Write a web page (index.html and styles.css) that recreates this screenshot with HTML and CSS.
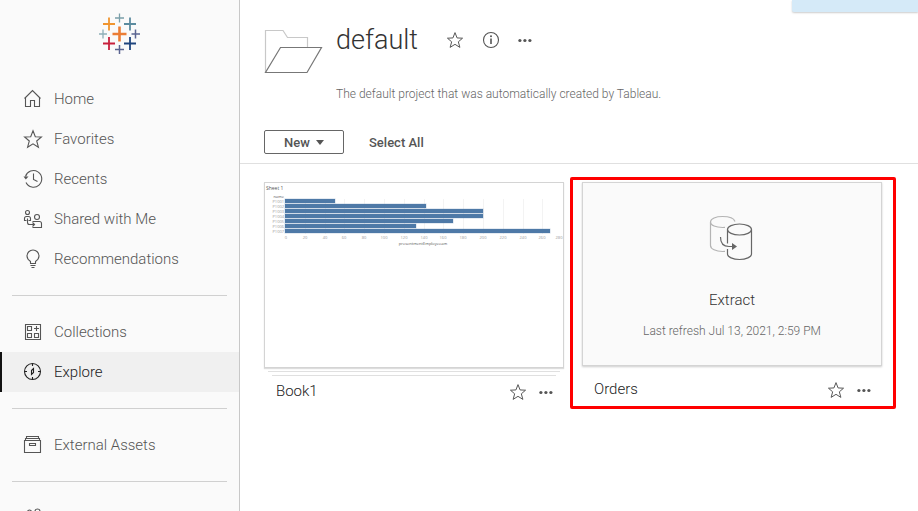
FILE: index.html
```
<!DOCTYPE html>
<html lang="en">
<head>
    <meta charset="UTF-8">
    <meta name="viewport" content="width=device-width, initial-scale=1.0">
    <link rel="stylesheet" href="styles.css">
    <title>default - Tableau</title>
</head>
<body>

<svg class="defs" width="0" height="0" aria-hidden="true">
    <symbol id="star" viewBox="0 0 20 20">
        <path d="M10 1.8 L12.3 7.7 L18.4 8 L13.7 12 L15.4 18.2 L10 14.8 L4.6 18.2 L6.3 12 L1.6 8 L7.7 7.7 Z"/>
    </symbol>
    <symbol id="dots" viewBox="0 0 14 18">
        <g class="solid"><circle cx="1.900" cy="9.500" r="1.600"/><circle cx="6.900" cy="9.500" r="1.600"/><circle cx="11.900" cy="9.500" r="1.600"/></g>
    </symbol>
</svg>

<div class="app">
    <nav class="sidebar">
        <svg class="logo" viewBox="0.5 0.5 41 41" aria-label="Tableau" role="img">
            <path stroke="#eb7d35" stroke-width="2.600" d="M21 14v15M14 21.500h14"/>
            <path stroke="#f0952f" stroke-width="1.800" d="M10.500 5v13M4.500 11.500h12"/>
            <path stroke="#5b8b9f" stroke-width="1.800" d="M31.500 5v13M25.500 11.500h12"/>
            <path stroke="#c8203c" stroke-width="1.800" d="M10.500 24.500v13M4.500 31h12"/>
            <path stroke="#1f457e" stroke-width="1.800" d="M31.500 24.500v13M25.500 31h12"/>
            <path stroke="#7a9fa9" stroke-width="1.300" d="M21 1v9M16.500 5.500h9"/>
            <path stroke="#8fb0b8" stroke-width="1.300" d="M4.500 17v9M0.500 21.500h8"/>
            <path stroke="#5b6591" stroke-width="1.500" d="M37 17v9M33 21.500h8.500"/>
            <path stroke="#5b6591" stroke-width="1.500" d="M21 32.500v9M16.500 37h9"/>
        </svg>

        <ul class="nav-list">
            <li><a class="nav-item" href="#">
                <svg class="icon" viewBox="0 0 20 20"><path d="M1.500 9.500 L9.500 1.500 L17.500 9.500 M2.500 8.500V17.500H7.500V11.500H11.500V17.500H16.500V8.500"/></svg>
                Home</a></li>
            <li><a class="nav-item" href="#">
                <svg class="icon"><use href="#star"/></svg>
                Favorites</a></li>
            <li><a class="nav-item" href="#">
                <svg class="icon" viewBox="0 0 20 20"><path d="M2.500 7.500A8.300 8.300 0 1 1 3 13.500M10.500 4.500V10.500L14.500 12.500"/><path class="solid" d="M0.500 7.500H5.500L2.800 10.500Z"/></svg>
                Recents</a></li>
            <li><a class="nav-item" href="#">
                <svg class="icon" viewBox="0 0 20 20"><circle cx="4.500" cy="3.500" r="2"/><circle cx="14" cy="8" r="2.500"/><path d="M1.500 12V9.500Q1.500 7.500 3.500 7.500H5.500Q7.500 7.500 7.500 9.500V12M1.500 11.500H3.500M5.500 11.500H7.500M4.500 9.500V13.500Q4.500 15.500 6.500 15.500H11M9.500 13.500L11.500 15.500L9.500 17.500M9.500 12.500H16.500Q18.500 12.500 18.500 14.500V18.500H9.500"/></svg>
                Shared with Me</a></li>
            <li><a class="nav-item" href="#">
                <svg class="icon" viewBox="0 0 20 20"><path d="M7.500 14.500V12.500Q4 10 4 7A6 6 0 0 1 16 7Q16 10 12.500 12.500V14.500ZM7.500 16.500H12.500M8.500 18.500H11.500"/></svg>
                Recommendations</a></li>
        </ul>

        <ul class="nav-list">
            <li><a class="nav-item" href="#">
                <svg class="icon" viewBox="0 0 20 20"><path d="M2.500 2.500H17.500V17.500H2.500ZM4.500 4.500H8.500V8.500H4.500ZM4.500 11.500H8.500V15.500H4.500ZM11.500 11.500H15.500V15.500H11.500ZM13.500 4V9M11 6.500H16"/></svg>
                Collections</a></li>
            <li><a class="nav-item active" href="#" aria-current="page">
                <svg class="icon" viewBox="0 0 20 20"><circle cx="9.500" cy="9.500" r="8"/><path d="M9.500 1.500V4M9.500 15V17.500M1.500 9.500H4M15 9.500H17.500M8.500 8.500L10.500 6.500V10.500L8.500 12.500Z"/></svg>
                Explore</a></li>
        </ul>

        <ul class="nav-list">
            <li><a class="nav-item" href="#">
                <svg class="icon" viewBox="0 0 20 20"><path d="M1.500 5.500H17.500V17.500H1.500ZM2.500 5.500V3.500H16.500V5.500M3.500 3.500V1.500H15.500V3.500M6.500 8.500H12.500V10.500H6.500Z"/></svg>
                External Assets</a></li>
        </ul>

        <ul class="nav-list">
            <li><a class="nav-item" href="#" aria-label="Users">
                <svg class="icon" viewBox="0 0 20 20"><circle cx="6.500" cy="4" r="2"/><circle cx="14.500" cy="3.500" r="2.500"/></svg>
            </a></li>
        </ul>
    </nav>

    <main class="content">
        <div class="toast"></div>

        <header class="project">
            <svg class="folder" viewBox="0 0 60 60" aria-hidden="true">
                <path stroke="#c8c8c8" d="M1.500 52V10.500H19L23.500 17.500H43.500V27"/>
                <path stroke="#777" d="M16.500 27.500H57.500L43 52.500H1.500Z"/>
            </svg>
            <div class="project-info">
                <div class="title-row">
                    <h1>default</h1>
                    <button class="icon-button" aria-label="Favorite"><svg class="icon"><use href="#star"/></svg></button>
                    <button class="icon-button" aria-label="Details"><svg class="icon" viewBox="0 0 18 18"><circle cx="9" cy="9" r="7.500"/><path stroke-width="1.600" d="M9 7.500V13"/><circle class="solid" cx="9" cy="5.200" r="1"/></svg></button>
                    <button class="icon-button" aria-label="More actions"><svg class="icon dots"><use href="#dots"/></svg></button>
                </div>
                <p class="description">The default project that was automatically created by Tableau.</p>
            </div>
        </header>

        <div class="toolbar">
            <button class="new-button">New <span class="caret"></span></button>
            <button class="select-all">Select All</button>
        </div>

        <section class="cards">
            <article class="card">
                <div class="thumb stacked">
                    <svg class="chart" viewBox="0 0 298 70" role="img" aria-label="Sheet 1">
                        <path class="grid-lines" d="M40.500 16V51M60.500 16V51M79.500 16V51M99.500 16V51M119.500 16V51M139.500 16V51M159.500 16V51M178.500 16V51M198.500 16V51M218.500 16V51M238.500 16V51M258.500 16V51M277.500 16V51"/>
                        <g class="bars">
                            <rect x="20" y="16" width="50" height="4"/>
                            <rect x="20" y="21" width="141" height="4"/>
                            <rect x="20" y="26" width="198" height="4"/>
                            <rect x="20" y="31" width="198" height="4"/>
                            <rect x="20" y="36" width="168" height="4"/>
                            <rect x="20" y="41" width="131" height="4"/>
                            <rect x="20" y="46" width="265" height="4"/>
                        </g>
                        <text class="chart-title" x="1" y="7">Sheet 1</text>
                        <g class="row-labels">
                            <text class="field" x="19" y="15">name</text>
                            <text x="19" y="20">P1001</text>
                            <text x="19" y="25">P1002</text>
                            <text x="19" y="30">P1003</text>
                            <text x="19" y="35">P1004</text>
                            <text x="19" y="40">P1005</text>
                            <text x="19" y="45">P1006</text>
                            <text x="19" y="50">P1007</text>
                        </g>
                        <g class="axis-labels">
                            <text x="21" y="56">0</text>
                            <text x="40" y="56">20</text>
                            <text x="60" y="56">40</text>
                            <text x="79" y="56">60</text>
                            <text x="99" y="56">80</text>
                            <text x="119" y="56">100</text>
                            <text x="139" y="56">120</text>
                            <text x="159" y="56">140</text>
                            <text x="178" y="56">160</text>
                            <text x="198" y="56">180</text>
                            <text x="218" y="56">200</text>
                            <text x="238" y="56">220</text>
                            <text x="258" y="56">240</text>
                            <text x="277" y="56">260</text>
                            <text x="294" y="56">280</text>
                            <text class="field" x="158" y="62">presentmentEmployeeam</text>
                        </g>
                    </svg>
                </div>
                <div class="card-footer">
                    <a class="card-name" href="#">Book1</a>
                    <button class="icon-button" aria-label="Favorite Book1"><svg class="icon"><use href="#star"/></svg></button>
                    <button class="icon-button" aria-label="More actions"><svg class="icon dots"><use href="#dots"/></svg></button>
                </div>
            </article>

            <article class="card highlighted">
                <div class="thumb extract">
                    <svg class="extract-icon" viewBox="0 0 46 48" aria-hidden="true">
                        <path stroke="#b4b4b4" d="M26 7.500C25 4.500 20 2.500 13.500 2.500C7 2.500 1.500 4.500 1.500 8C1.500 11.500 7 13.500 13.500 13.500L16 13.400M1.500 8V31.500C1.500 35 7 37.500 13.500 37.500L16 37.300"/>
                        <g stroke="#666">
                            <ellipse cx="30.500" cy="15.500" rx="12" ry="5.500"/>
                            <path d="M18.500 15.500V29.500M18.500 35V40C18.500 43 24 45.500 30.500 45.500S42.500 43 42.500 40V15.500M11.500 23C11.500 29 14 32.500 20 32.500H24"/>
                            <path class="arrow-head" d="M23 29L28 32.500L23 36Z"/>
                        </g>
                    </svg>
                    <p class="extract-label">Extract</p>
                    <p class="refresh">Last refresh Jul 13, 2021, 2:59 PM</p>
                </div>
                <div class="card-footer">
                    <a class="card-name" href="#">Orders</a>
                    <button class="icon-button" aria-label="Favorite Orders"><svg class="icon"><use href="#star"/></svg></button>
                    <button class="icon-button" aria-label="More actions"><svg class="icon dots"><use href="#dots"/></svg></button>
                </div>
            </article>
        </section>
    </main>
</div>

</body>
</html>
```

FILE: styles.css
```
* {
    box-sizing: border-box;
}

body {
    margin: 0;
    font-family: Roboto, "Liberation Sans", sans-serif;
    font-weight: 300;
    font-size: 15px;
    color: #333;
    background-color: #fff;
}

button {
    font-family: inherit;
    background: none;
    border: none;
    padding: 0;
    cursor: pointer;
}

h1, p, ul {
    margin: 0;
    padding: 0;
    font-weight: 300;
}

svg {
    display: block;
    fill: none;
}

.defs {
    position: absolute;
}

.app {
    display: flex;
    height: 100vh;
    overflow: hidden;
}

/* sidebar */
.sidebar {
    width: 240px;
    flex-shrink: 0;
    overflow: hidden;
    background-color: #fafafa;
    border-right: 1px solid #c8c8c8;
}

.logo {
    width: 41px;
    height: 41px;
    margin: 13px auto 25px;
}

.nav-list {
    list-style: none;
}

.nav-list + .nav-list::before {
    content: "";
    display: block;
    height: 1px;
    margin: 16px 12px;
    background-color: #d0d0d0;
}

.nav-item {
    display: flex;
    align-items: center;
    gap: 11px;
    height: 40px;
    padding-left: 23px;
    color: #555;
    text-decoration: none;
}

.nav-item.active {
    color: #222;
    background-color: #f0f0f0;
    box-shadow: inset 2px 0 #111;
}

.icon {
    width: 20px;
    height: 20px;
    stroke: currentColor;
    stroke-width: 1.1;
}

.solid {
    fill: currentColor;
    stroke: none;
}

/* project header */
.content {
    flex: 1;
    min-width: 0;
}

.toast {
    position: absolute;
    top: 0;
    right: 0;
    width: 126px;
    height: 12px;
    background-color: #d5eaf8;
    border-bottom-left-radius: 2px;
    box-shadow: 0 1px 2px #ccc;
}

.project {
    display: flex;
    gap: 12px;
    padding: 20px 24px 0;
}

.folder {
    width: 60px;
    height: 60px;
    stroke-width: 1.2;
}

.title-row {
    display: flex;
    align-items: center;
    gap: 18px;
    height: 40px;
}

h1 {
    margin-right: 10px;
    font-size: 27px;
}

.icon-button {
    color: #555;
}

.icon-button .icon {
    width: 18px;
    height: 18px;
}

.icon-button .dots {
    width: 14px;
}

.description,
.refresh {
    font-size: 12px;
    line-height: 16px;
    color: #666;
}

.description {
    margin-top: 26px;
}

.toolbar {
    display: flex;
    align-items: center;
    gap: 25px;
    margin-top: 20px;
    padding: 8px 24px 9px;
    border-bottom: 1px solid #e0e0e0;
}

.new-button,
.select-all {
    height: 24px;
    font-size: 13px;
    font-weight: 500;
    color: #555;
}

.new-button {
    display: flex;
    align-items: center;
    justify-content: center;
    gap: 6px;
    width: 80px;
    border: 1px solid #666;
    border-radius: 2px;
}

.caret {
    border: 4px solid transparent;
    border-top: 5px solid #555;
    border-bottom: 0;
}

/* cards */
.cards {
    display: flex;
    flex-wrap: wrap;
    gap: 18px;
    padding: 18px 24px;
}

.card {
    position: relative;
    width: 300px;
}

.highlighted::after {
    content: "";
    position: absolute;
    inset: -5px -14px 7px -12px;
    border: 3px solid #f00;
    border-radius: 2px;
    pointer-events: none;
}

.thumb {
    height: 186px;
    border: 1px solid #d4d4d4;
    background-color: #fff;
}

/* sheets peeking out below a workbook */
.stacked {
    box-shadow: 0 1px 1px #ddd,
        0 7px 0 -4px #fff, 0 8px 0 -4px #e0e0e0,
        0 15px 0 -8px #fff, 0 16px 0 -8px #e0e0e0;
}

.bars {
    fill: #4e79a7;
}

.bars rect {
    stroke: #4e79a7;
    stroke-opacity: 0.3;
}

.grid-lines {
    stroke: #f3f3f3;
}

.chart text {
    fill: #999;
    font-family: "Open Sans", sans-serif;
    font-size: 4px;
    font-weight: 400;
}

.chart .chart-title {
    fill: #555;
    font-size: 5px;
}

.chart .field {
    fill: #555;
}

.row-labels {
    text-anchor: end;
}

.axis-labels {
    text-anchor: middle;
}

.extract {
    height: 184px;
    background-color: #fafafa;
    box-shadow: 0 1px 2px #ccc;
    text-align: center;
}

.extract-icon {
    width: 46px;
    height: 48px;
    margin: 31px auto 29px;
    stroke-width: 1.2;
}

.arrow-head {
    fill: #666;
    stroke: none;
}

.refresh {
    margin-top: 14px;
}

.card-footer {
    display: flex;
    align-items: center;
    gap: 12px;
    height: 48px;
    padding: 0 11px 0 12px;
}

.card-name {
    flex: 1;
    padding-bottom: 2px;
    color: #222;
    text-decoration: none;
}
```
